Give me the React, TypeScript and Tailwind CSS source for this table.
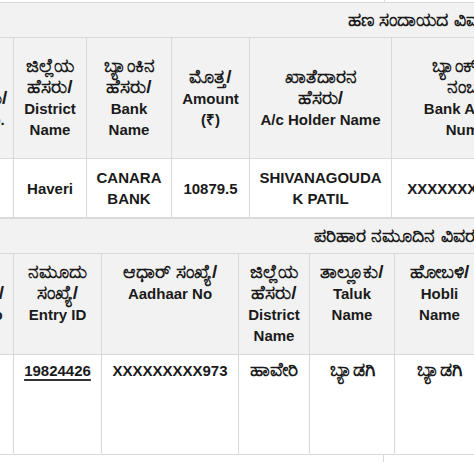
import React from 'react';

type Row = { lines: string[]; link?: boolean }[];

// kannada fallback font renders small, so bump it to match latin cap height
const Text = ({ s }: { s: string }) =>
  /[\u0C80-\u0CFF]/.test(s) ? <span className="text-[19px] leading-[14px]">{s}</span> : <>{s}</>;

const Lines = ({ lines }: { lines: string[] }) => (
  <>
    {lines.map((l, i) => (
      <React.Fragment key={i}>
        {i > 0 && <br />}
        <Text s={l} />
      </React.Fragment>
    ))}
  </>
);

const paymentCols = [60, 73, 85, 78, 142, 165];
const paymentHead: Row = [
  { lines: ['ಕ್ರಮ', 'ಹೆಸರು/', 'Sl No.'] },
  { lines: ['ಜಿಲ್ಲೆಯ', 'ಹೆಸರು/', 'District', 'Name'] },
  { lines: ['ಬ್ಯಾಂಕಿನ', 'ಹೆಸರು/', 'Bank', 'Name'] },
  { lines: ['ಮೊತ್ತ/', 'Amount', '(₹)'] },
  { lines: ['ಖಾತೆದಾರನ', 'ಹೆಸರು/', 'A/c Holder Name'] },
  { lines: ['ಬ್ಯಾಂಕ್ ಖಾತೆ', 'ನಂಬರ್/', 'Bank Account', 'Number'] },
];
const paymentData: Row = [
  { lines: ['1'] },
  { lines: ['Haveri'] },
  { lines: ['CANARA', 'BANK'] },
  { lines: ['10879.5'] },
  { lines: ['SHIVANAGOUDA', 'K PATIL'] },
  { lines: ['XXXXXXXXXX6789'] },
];

const entryCols = [60, 88, 137, 71, 85, 90];
const entryHead: Row = [
  { lines: ['ಕ್ರಮ', 'ಸಂಖ್ಯೆ/', 'Sl No'] },
  { lines: ['ನಮೂದು', 'ಸಂಖ್ಯೆ/', 'Entry ID'] },
  { lines: ['ಆಧಾರ್ ಸಂಖ್ಯೆ/', 'Aadhaar No'] },
  { lines: ['ಜಿಲ್ಲೆಯ', 'ಹೆಸರು/', 'District', 'Name'] },
  { lines: ['ತಾಲ್ಲೂಕು/', 'Taluk', 'Name'] },
  { lines: ['ಹೋಬಳಿ/', 'Hobli', 'Name'] },
];
const entryData: Row = [
  { lines: ['1'] },
  { lines: ['19824426'], link: true },
  { lines: ['XXXXXXXXX973'] },
  { lines: ['ಹಾವೇರಿ'] },
  { lines: ['ಬ್ಯಾಡಗಿ'] },
  { lines: ['ಬ್ಯಾಡಗಿ'] },
];

const cell = 'border border-[#d9d9d9] px-2 text-center';

function Block({
  title,
  titlePad,
  cols,
  head,
  data,
  valign,
  titleH,
  headH,
  dataH,
  dataPad,
}: {
  title: string;
  titlePad: string;
  cols: number[];
  head: Row;
  data: Row;
  valign: string;
  titleH: string;
  headH: string;
  dataH: string;
  dataPad: string;
}) {
  return (
    <table className="ml-[-47px] table-fixed border-collapse" style={{ width: cols.reduce((a, b) => a + b, 0) }}>
      <colgroup>
        {cols.map((w, i) => (
          <col key={i} style={{ width: w }} />
        ))}
      </colgroup>
      <tbody>
        <tr className={titleH}>
          <td colSpan={cols.length} className={`border border-[#d9d9d9] bg-[#f2f2f2] ${titlePad} whitespace-nowrap py-0 text-left align-middle`}>
            <Text s={title} />
          </td>
        </tr>
        <tr className={headH}>
          {head.map((c, i) => (
            <th key={i} className={`${cell} py-2 ${valign} bg-[#f2f2f2] font-bold whitespace-nowrap`}>
              <Lines lines={c.lines} />
            </th>
          ))}
        </tr>
        <tr className={dataH}>
          {data.map((c, i) => (
            <td key={i} className={`${cell} ${dataPad} ${valign} bg-white whitespace-nowrap`}>
              {c.link ? (
                <span className="underline decoration-[#333] decoration-[1.5px] underline-offset-[3px]">{c.lines[0]}</span>
              ) : (
                <Lines lines={c.lines} />
              )}
            </td>
          ))}
        </tr>
      </tbody>
    </table>
  );
}

export default function App() {
  return (
    <div className="h-[462px] w-[474px] overflow-hidden bg-white font-['Liberation_Sans',Arial,sans-serif] text-[15px] leading-[21px] font-bold text-[#1a1a1a]">
      <div className="h-[2px] w-[385px] border-r border-[#d9d9d9]" />
      <Block
        title="ಹಣ ಸಂದಾಯದ ವಿವರಗಳು"
        titlePad="pl-[394px]"
        cols={paymentCols}
        head={paymentHead}
        data={paymentData}
        valign="align-middle"
        titleH="h-[35px]"
        headH="h-[121px]"
        dataH="h-[56px]"
        dataPad="py-2"
      />
      <Block
        title="ಪರಿಹಾರ ನಮೂದಿನ ವಿವರಗಳು"
        titlePad="pl-[360px]"
        cols={entryCols}
        head={entryHead}
        data={entryData}
        valign="align-top"
        titleH="h-[35px]"
        headH="h-[99px]"
        dataH="h-[100px]"
        dataPad="pt-[5px] pb-2"
      />
      <div className="h-[12px] w-[384px] border-r border-[#d9d9d9]" />
    </div>
  );
}
